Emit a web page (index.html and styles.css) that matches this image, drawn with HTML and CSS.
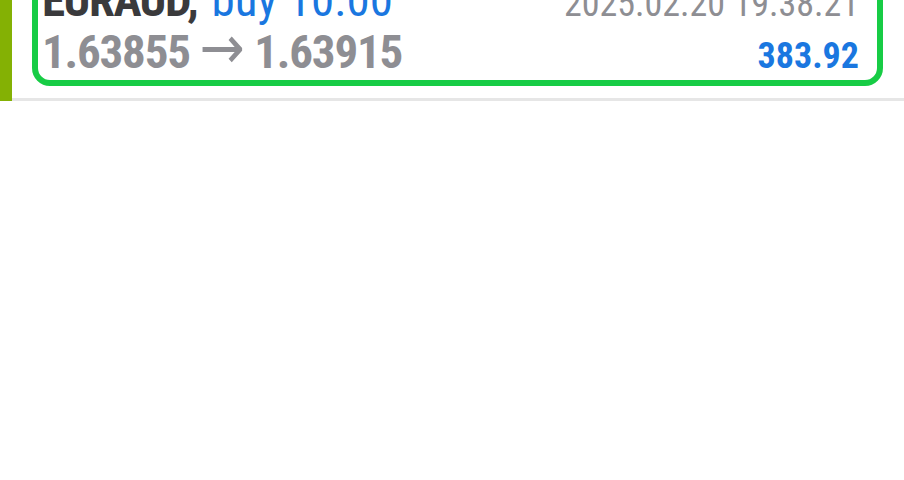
FILE: index.html
```html
<!DOCTYPE html>
<html lang="en">
<head>
    <meta charset="UTF-8">
    <meta name="viewport" content="width=device-width, initial-scale=1.0">
    <title>History</title>
    <link rel="stylesheet" href="styles.css">
</head>
<body>
    <main class="history">
        <!-- trade row, scrolled so its top sits above the window -->
        <div class="trade">
            <div class="trade-marker"></div>
            <div class="trade-body">
                <div class="trade-card">
                    <div class="trade-line trade-line-head">
                        <span class="trade-symbol">EURAUD, <span class="trade-type">buy 10.00</span></span>
                        <span class="trade-time">2025.02.20 19.38.21</span>
                    </div>
                    <div class="trade-line trade-line-foot">
                        <span class="trade-prices">1.63855 <span class="trade-arrow">&rarr;</span> 1.63915</span>
                        <span class="trade-profit">383.92</span>
                    </div>
                </div>
            </div>
        </div>
    </main>
</body>
</html>
```

FILE: styles.css
```css
body {
    margin: 0;
    background: #fff;
    font-family: Roboto, "Noto Sans", sans-serif;
    font-stretch: 75%;
}

.trade {
    display: flex;
    margin-top: -40px;
}

.trade-marker {
    width: 12px;
    background-color: #84b104;
}

.trade-body {
    flex: 1;
    padding: 10px 21px 12px 20px;
    border-bottom: 3px solid #e6e6e6;
}

.trade-card {
    border: 6px solid #17cc45;
    border-radius: 18px;
    padding: 0 18px 0 4px;
}

.trade-line {
    display: flex;
    justify-content: space-between;
    align-items: baseline;
}

.trade-line-head {
    line-height: 47px;
}

.trade-line-foot {
    line-height: 47px;
}

.trade-symbol {
    color: #3a3a3c;
    font-size: 47px;
    font-weight: 700;
    letter-spacing: -1.5px;
}

.trade-type {
    margin-left: 5px;
    color: #1a77e0;
    font-weight: 400;
    letter-spacing: 0;
}

.trade-time {
    color: #8e8e93;
    font-size: 36px;
}

.trade-prices {
    color: #8e8e93;
    font-size: 47px;
    font-weight: 700;
    letter-spacing: -1.2px;
}

.trade-arrow {
    font-family: "DejaVu Sans", sans-serif;
    font-size: 60px;
    font-weight: 400;
    line-height: 0;
    letter-spacing: 0;
}

.trade-profit {
    color: #1a77e0;
    font-size: 36px;
    font-weight: 700;
}
```
